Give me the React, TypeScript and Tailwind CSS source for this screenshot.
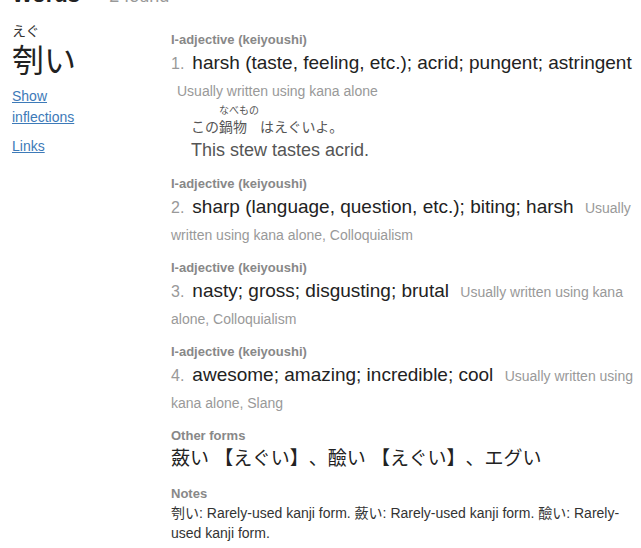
const tag = "text-[13px] leading-[19px] font-bold text-[#888]";
const def = "text-[19px] leading-[27px] text-[#222]";
const info = "ml-[6px] text-[14px] leading-[14px] text-[#999]";

type Sense = { n: number; text: string; note: string };

const senses: Sense[] = [
  { n: 2, text: "sharp (language, question, etc.); biting; harsh", note: "Usually written using kana alone, Colloquialism" },
  { n: 3, text: "nasty; gross; disgusting; brutal", note: "Usually written using kana alone, Colloquialism" },
  { n: 4, text: "awesome; amazing; incredible; cool", note: "Usually written using kana alone, Slang" },
];

function Divider({ n }: { n: number }) {
  return <span className="mr-2 text-[16px] leading-[16px] text-[#999]">{n}.</span>;
}

export default function App() {
  return (
    <div className="h-[548px] w-[641px] overflow-hidden bg-white font-['Liberation_Sans','Noto_Sans_CJK_JP',sans-serif] text-[#222] [text-spacing-trim:space-all]">
      <h4 className="-mt-4 pl-3 text-[22px] font-bold leading-[22px]">
        Words <span className="text-[18px] font-normal text-[#999]">— 2 found</span>
      </h4>

      <div className="mt-[14px] flex">
        {/* headword */}
        <div className="w-[171px] shrink-0 pl-3 pr-[60px]">
          <div className="text-[14px] leading-[20px] text-[#333]">えぐ</div>
          <div className="text-[32px] leading-[40px]">刳い</div>
          <div className="mt-[5px] text-[14px] leading-[21px] text-[#3d7ab8]">
            <a href="#" className="underline">Show inflections</a>
          </div>
          <div className="mt-2 text-[14px] leading-[21px] text-[#3d7ab8]">
            <a href="#" className="underline">Links</a>
          </div>
        </div>

        {/* meanings */}
        <div className="min-w-0 flex-1 pt-[9px]">
          <div className="mb-[10px]">
            <div className={tag}>I-adjective (keiyoushi)</div>
            <div className={def}>
              <Divider n={1} />
              harsh (taste, feeling, etc.); acrid; pungent; astringent{" "}
              <span className={info}>Usually written using kana alone</span>
            </div>
            <div className="ml-5 text-[#555]">
              <div className="flex items-end text-[14px] leading-[20px]">
                <span>この</span>
                <span className="flex flex-col">
                  <span className="pt-[2px] text-[10px] leading-[12px]">なべもの</span>
                  <span>鍋物</span>
                </span>
                <span className="ml-px">はえぐいよ。</span>
              </div>
              <div className="text-[18px] leading-[27px]">This stew tastes acrid.</div>
            </div>
          </div>

          {senses.map((s) => (
            <div key={s.n} className="mb-[11px]">
              <div className={tag}>I-adjective (keiyoushi)</div>
              <div className={def}>
                <Divider n={s.n} />
                {s.text} <span className={info}>{s.note}</span>
              </div>
            </div>
          ))}

          <div className="mb-[12px]">
            <div className={tag}>Other forms</div>
            <div className={def}>蘞い 【えぐい】、醶い 【えぐい】、エグい</div>
          </div>

          <div>
            <div className={tag}>Notes</div>
            <div className="text-[14px] leading-[20px] text-[#333]">
              刳い: Rarely-used kanji form. 蘞い: Rarely-used kanji form. 醶い: Rarely-used kanji form.
            </div>
          </div>
        </div>
      </div>
    </div>
  );
}
